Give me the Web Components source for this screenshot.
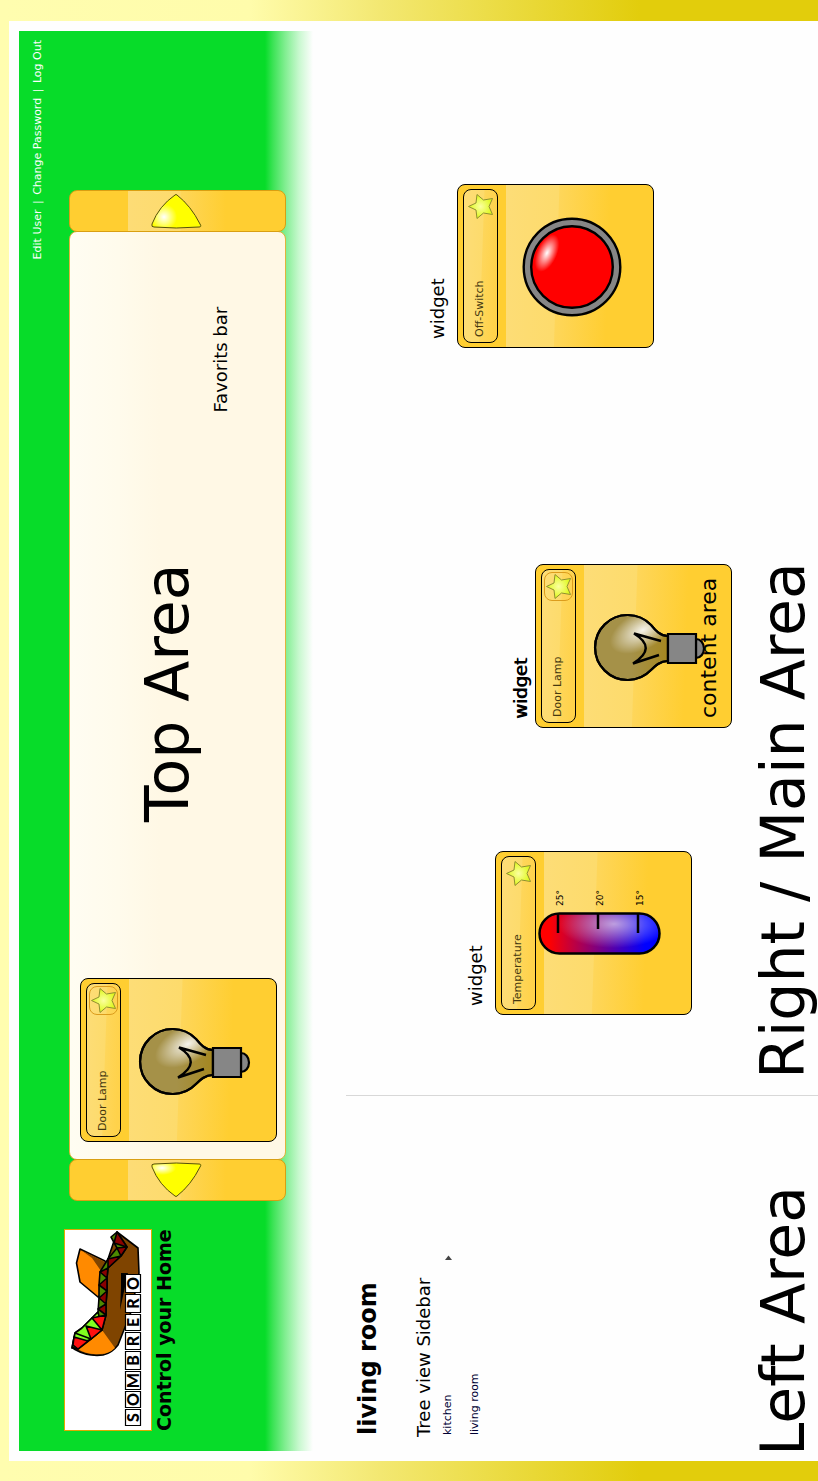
<!DOCTYPE html>
<html lang="en">
<head>
<meta charset="utf-8">
<title>Sombrero - Control your Home</title>
<style>
  html, body { margin: 0; background: #fff; }
  body { position: relative; height: 100vh; overflow: clip; contain: paint; font-family: "DejaVu Sans", sans-serif; color: #000; }
</style>
</head>
<body>
<home-app>
  <page-header slot="header">
    <user-links slot="links"></user-links>
    <brand-logo slot="brand"></brand-logo>
    <favorites-bar slot="favorites">
      <device-widget name="Door Lamp" kind="lamp" favorite></device-widget>
      <area-title class="top">Top Area</area-title>
      <note-label class="fav">Favorits bar</note-label>
    </favorites-bar>
  </page-header>
  <room-sidebar slot="sidebar"></room-sidebar>
  <room-canvas slot="main"></room-canvas>
</home-app>

<script>
const define = (name, html, setup) => {
  const template = document.createElement('template');
  template.innerHTML = html;
  customElements.define(name, class extends HTMLElement {
    constructor() {
      super();
      this.attachShadow({ mode: 'open' }).append(template.content.cloneNode(true));
    }
    connectedCallback() { if (setup) setup(this, this.shadowRoot); }
  });
};

define('home-app', `
  <style>
    :host {
      display: flex; box-sizing: border-box; width: 100vh; min-height: 100vw; overflow: hidden;
      padding: 9px 21px 0 20px;
      transform-origin: 0 0; transform: rotate(-90deg) translateX(-100%);
      background: linear-gradient(to bottom, #fffdaf 0, #fffcab 250px, #f3e872 380px, #e2cd0c 640px);
    }
    .page {
      flex: 1; display: flex; flex-direction: column; min-width: 0;
      padding: 10px 10px 0; background: #fefefe;
    }
    .body { flex: 1; display: grid; grid-template-columns: 355px 1fr; }
    .body > slot { display: contents; }
  </style>
  <div class="page">
    <slot name="header"></slot>
    <div class="body"><slot name="sidebar"></slot><slot name="main"></slot></div>
  </div>`);

define('page-header', `
  <style>
    :host {
      display: flex; flex-direction: column; height: 294px;
      background: linear-gradient(to bottom, #07dc29 246px, #3ce356 254px, #80ee90 266px, #c8f8cf 280px, #fefefe 294px);
    }
    .row { display: flex; align-items: flex-start; gap: 28px; padding: 0 159px 0 20px; }
  </style>
  <slot name="links"></slot>
  <div class="row"><slot name="brand"></slot><slot name="favorites"></slot></div>`);

define('user-links', `
  <style>
    :host { display: block; padding: 10px 9px 0 0; height: 35px; text-align: right; color: #fff;
      font-size: 11px; line-height: 18px; }
    a { color: inherit; text-decoration: none; }
    span { margin: 0 2px; }
  </style>
  <nav><a href="#edit">Edit User</a> <span>|</span> <a href="#password">Change Password</a> <span>|</span> <a href="#logout">Log Out</a></nav>`);

define('brand-logo', `
  <style>
    :host { display: block; width: 202px; }
    svg { display: block; box-sizing: border-box; width: 202px; height: 88px; border: 1px solid #e0a800; background: #fff; }
    p { margin: 0; font-size: 19px; font-weight: bold; line-height: 24px; white-space: nowrap; }
  </style>
  <svg viewBox="1 1 200 86" role="img" aria-label="Sombrero">
    <g stroke="#000" stroke-width="1.6" stroke-linejoin="round">
      <path fill="#ff8a00" d="M182 16 168 12.500 149 16 134 34 140 42 164 42 170 41z"/>
      <path fill="#7f4400" stroke="none" d="M181 17 173 28 160 37 158 41 169 41z"/>
      <path fill="#7f4400" d="M199 53 183 74 158 75 119 67 86 54Q78 48 76 39 74 24 82 10L103 34 160 40z"/>
      <path fill="#ff8a00" stroke="none" d="M82 14 101 38 83 51Q77 45 77 36 76 22 82 14z"/>
      <path fill="#000" stroke="none" d="M158 57V64L121 56 143 57z"/>
      <path fill="#4c8a00" d="M83 8 98 11 103 18 119 34 133 35 146 35 159 36 172 44 183 53 194 47 199 53 184 63 175 57 163 44 153 43 140 43 127 42 116 42 101 38 92 27 82 14z"/>
      <path fill="#80ff20" d="M83 8 98 11 92 27z M98 11 103 18 119 34 101 38 92 27z"/>
      <g fill="#8a0000">
        <path d="M116 42 127 42 122 34z M127 42 140 43 133 35z M140 43 153 43 146 35z M153 43 163 44 159 36z M163 44 175 57 172 44z M175 57 184 63 183 53z M184 63 199 53 188 50z"/>
      </g>
      <g fill="#ff1010">
        <path d="M82 14 90 24 94 10 86 9z M92 27 101 38 105 22z M101 38 116 42 113 28z"/>
      </g>
    </g>
    <g fill="#fff" stroke="#000" stroke-width="1.2">
      <path d="M5.500 61.500h16v15h-16z M23.500 61.500h16v15h-16z M41.500 61.500h18v15h-18z M61.500 61.500h18v15h-18z M81.500 61.500h17v15h-17z M100.500 61.500h16v15h-16z M118.500 61.500h18v15h-18z M138.500 61.500h18v15h-18z"/>
    </g>
    <text x="13.500 31.500 50.500 70.500 90 108.500 127.500 147.500" y="75" text-anchor="middle" font-family="Lato, sans-serif" font-weight="900" font-size="16">SOMBRERO</text>
  </svg>
  <p>Control your Home</p>`);

define('favorites-bar', `
  <style>
    :host { display: flex; flex: 1; min-width: 0; height: 217px; margin-top: 5px; }
    button {
      position: relative; flex: none; width: 42px; padding: 0; border: 1px solid #d99f12; border-radius: 8px;
      background: linear-gradient(to bottom, #ffce31 58px, #fddc76 58px, #fddb6c 110px, #fed659 111px, #ffce31 156px);
    }
    svg { display: block; width: 40px; height: 215px; }
    .panel {
      flex: 1; display: flex; align-items: flex-start; box-sizing: border-box; min-width: 0;
      margin: 0 -1px; padding: 10px 0 0 17px; border: 1px solid #e2b23c; border-radius: 8px;
      background: linear-gradient(to bottom, #fffdf2 0, #fffbec 48px, #fff8e5 90px);
    }
    ::slotted(.top) { margin: 57px 0 0 156px; }
    ::slotted(.fav) { margin: 131px 0 0 151px; }
  </style>
  <button aria-label="Previous favorites"><svg viewBox="0 1 40 215">
    <defs><radialGradient id="g" gradientUnits="userSpaceOnUse" cx="32" cy="93" r="14" gradientTransform="translate(16 0) scale(.5 1)"><stop offset="0" stop-color="#fff"/><stop offset="1" stop-color="#ff0"/></radialGradient></defs>
    <path d="M4 106Q15 90 33 83 36 82 36 85 38 107 36 130 36 133 33 131 15 122 4 108 3 107 4 106z" fill="url(#g)" stroke="#55500a"/></svg></button>
  <div class="panel"><slot></slot></div>
  <button aria-label="Next favorites"><svg viewBox="1 1 40 215">
    <defs><radialGradient id="h" gradientUnits="userSpaceOnUse" cx="15" cy="95" r="13"><stop offset="0" stop-color="#fff"/><stop offset="1" stop-color="#ff0"/></radialGradient></defs>
    <path d="M37 106Q26 90 8 83 5 82 5 85 3 107 5 130 5 133 8 131 26 122 37 108 38 107 37 106z" fill="url(#h)" stroke="#55500a"/></svg></button>`);

define('area-title', `
  <style>
    :host { display: block; }
    h2 { margin: 0; font-size: 60px; font-weight: 400; line-height: 60px; white-space: nowrap; }
  </style>
  <h2><slot></slot></h2>`);

define('note-label', `
  <style>:host { display: block; font-size: 18px; line-height: 20px; white-space: nowrap; }</style>
  <slot></slot>`);

const drawings = {
  lamp: `
    <defs>
      <radialGradient id="shine" gradientUnits="userSpaceOnUse" cx="0" cy="0" r="1" gradientTransform="translate(98 108) rotate(62) scale(36 19)"><stop offset="0" stop-color="#fff" stop-opacity=".9"/><stop offset="1" stop-color="#fff" stop-opacity="0"/></radialGradient>
      <linearGradient id="glass" x1="0" y1="0" x2="0" y2="1"><stop offset=".5" stop-color="#a59148"/><stop offset="1" stop-color="#a58720"/></linearGradient>
    </defs>
    <g stroke="#000" stroke-width="2.2">
      <path d="M70 161a9.500 8 0 0 0 19 0z" fill="#868686"/>
      <path d="M67 133C67 125 62 120 58 116A32.500 32.500 0 1 1 103 116C98 120 92 125 92 133z" fill="url(#glass)"/>
      <path d="M67 133C67 125 62 120 58 116A32.500 32.500 0 1 1 103 116C98 120 92 125 92 133z" fill="url(#shine)"/>
      <path d="M65 133h29v28h-29z" fill="#868686"/>
      <path d="M87 126 94.500 99Q80 123 64.500 98L73 124" fill="none" stroke-width="2.500"/>
    </g>`,
  switch: `
    <defs><radialGradient id="shine" gradientUnits="userSpaceOnUse" cx="0" cy="0" r="1" gradientTransform="translate(95 90) rotate(24) scale(20 10)"><stop offset="0" stop-color="#fff"/><stop offset="1" stop-color="#fff" stop-opacity="0"/></radialGradient></defs>
    <g stroke="#000" stroke-width="2.400">
      <circle cx="81" cy="115" r="48.300" fill="#868686"/>
      <circle cx="81" cy="115" r="40.800" fill="#f00"/>
    </g>
    <circle cx="81" cy="115" r="39.500" fill="url(#shine)"/>`,
  thermometer: `
    <defs>
      <linearGradient id="heat" x1="0" y1="0" x2="0" y2="1"><stop offset=".08" stop-color="#f00"/><stop offset=".88" stop-color="#00f"/></linearGradient>
      <radialGradient id="shine" gradientUnits="userSpaceOnUse" cx="0" cy="0" r="1" gradientTransform="translate(91 119) scale(24 56)"><stop offset="0" stop-color="#fff" stop-opacity=".62"/><stop offset="1" stop-color="#fff" stop-opacity="0"/></radialGradient>
    </defs>
    <rect x="61.500" y="44.500" width="40" height="120" rx="20" fill="url(#heat)"/>
    <rect x="61.500" y="44.500" width="40" height="120" rx="20" fill="url(#shine)" stroke="#000" stroke-width="2.500"/>
    <path d="M82 63h20M86 103h16M82 143h20" stroke="#000" stroke-width="2.500"/>
    <g font-size="9" font-family="DejaVu Sans, sans-serif"><text x="109" y="68">25°</text><text x="109" y="108">20°</text><text x="109" y="148">15°</text></g>`
};

define('device-widget', `
  <style>
    :host {
      display: block; flex: none; box-sizing: border-box; width: 164px; padding: 5px 4px;
      border: 1px solid #000; border-radius: 8px; color: #453810;
      background:
        linear-gradient(182deg, #fddd77 0, #fddb6c 53px, #fed65a 54px, #ffce31 105px) 0 48px / 100% 147px no-repeat,
        #ffce31;
    }
    header {
      display: flex; align-items: center; justify-content: space-between; box-sizing: border-box; height: 35px;
      padding: 0 2px 1px 5px; border: 1px solid #000; border-radius: 8px;
      background: linear-gradient(182deg, #fddd77 0, #fddb6c 20px, #fed65a 21px, #ffd24a 35px);
    }
    h3 { margin: 0; font-size: 11px; font-weight: 400; line-height: 16px; }
    button { box-sizing: border-box; width: 29px; height: 29px; padding: 0; border: 1px solid transparent; border-radius: 8px; background: none; }
    :host([favorite]) button { border-color: #dc9c1c; }
    svg { display: block; }
    .drawing { width: 154px; height: 150px; color: #000; }
  </style>
  <header>
    <h3></h3>
    <button aria-label="Favorite"><svg width="27" height="27" viewBox="0 0 27 27">
      <defs><radialGradient id="star"><stop offset="0" stop-color="#fbffa0"/><stop offset="1" stop-color="#dff81c"/></radialGradient></defs>
      <path d="M13.500 1.500 17 9 25.500 10 20 16.500 21.500 25.500 13.500 22 5.500 25.500 7 16.500 1.500 10 10 9z" fill="url(#star)" stroke="#8f9030"/></svg></button>
  </header>
  <svg class="drawing" viewBox="5 41 154 150"></svg>`,
  (host, root) => {
    root.querySelector('h3').textContent = host.getAttribute('name');
    root.querySelector('.drawing').innerHTML = drawings[host.getAttribute('kind')];
  });

define('room-sidebar', `
  <style>
    :host { display: flex; flex-direction: column; padding: 39px 0 5px; box-sizing: border-box; }
    h1 { margin: 0 0 0 16px; font-size: 24px; line-height: 32px; }
    note-label { margin: 30px 0 0 14px; }
    ul { margin: 6px 0 0; padding: 0 0 0 16px; list-style: none; font-size: 11px; line-height: 16px; }
    li { display: flex; align-items: center; margin-bottom: 11px; }
    a { width: 175px; color: #000033; text-decoration: none; }
    svg { display: block; }
    area-title { margin: auto 0 0 -5px; }
  </style>
  <h1>living room</h1>
  <note-label>Tree view Sidebar</note-label>
  <ul>
    <li><a href="#kitchen">kitchen</a><svg width="5" height="7" viewBox="0 0 5 7"><path d="M0 0 4.500 3.500 0 7z" fill="#444"/></svg></li>
    <li><a href="#living">living room</a></li>
  </ul>
  <area-title>Left Area</area-title>`);

define('room-canvas', `
  <style>
    :host { display: flex; flex-direction: column; min-width: 0; margin-top: 33px; padding: 82px 0 5px; box-sizing: border-box;
      background: linear-gradient(#d8d8d8, #d8d8d8) 0 0 / 1px 100% no-repeat; }
    .widgets { display: flex; align-items: flex-start; padding-left: 81px; }
    figure { position: relative; display: flex; flex-direction: column; gap: 9px; margin: 0; }
    figcaption { padding-left: 9px; }
    .temperature { margin-top: 38px; }
    .lamp { margin: 83px 216px 0 123px; gap: 4px; }
    .lamp figcaption { text-shadow: 1px 0 #000; }
    .content { position: absolute; left: 10px; bottom: 11px; font-size: 22px; line-height: 24px; }
    area-title { margin: auto 0 0 17px; }
  </style>
  <div class="widgets">
    <figure class="temperature"><figcaption><note-label>widget</note-label></figcaption><device-widget name="Temperature" kind="thermometer"></device-widget></figure>
    <figure class="lamp"><figcaption><note-label>widget</note-label></figcaption><device-widget name="Door Lamp" kind="lamp" favorite></device-widget><note-label class="content">content area</note-label></figure>
    <figure><figcaption><note-label>widget</note-label></figcaption><device-widget name="Off-Switch" kind="switch"></device-widget></figure>
  </div>
  <area-title>Right / Main Area</area-title>`);
</script>
</body>
</html>
